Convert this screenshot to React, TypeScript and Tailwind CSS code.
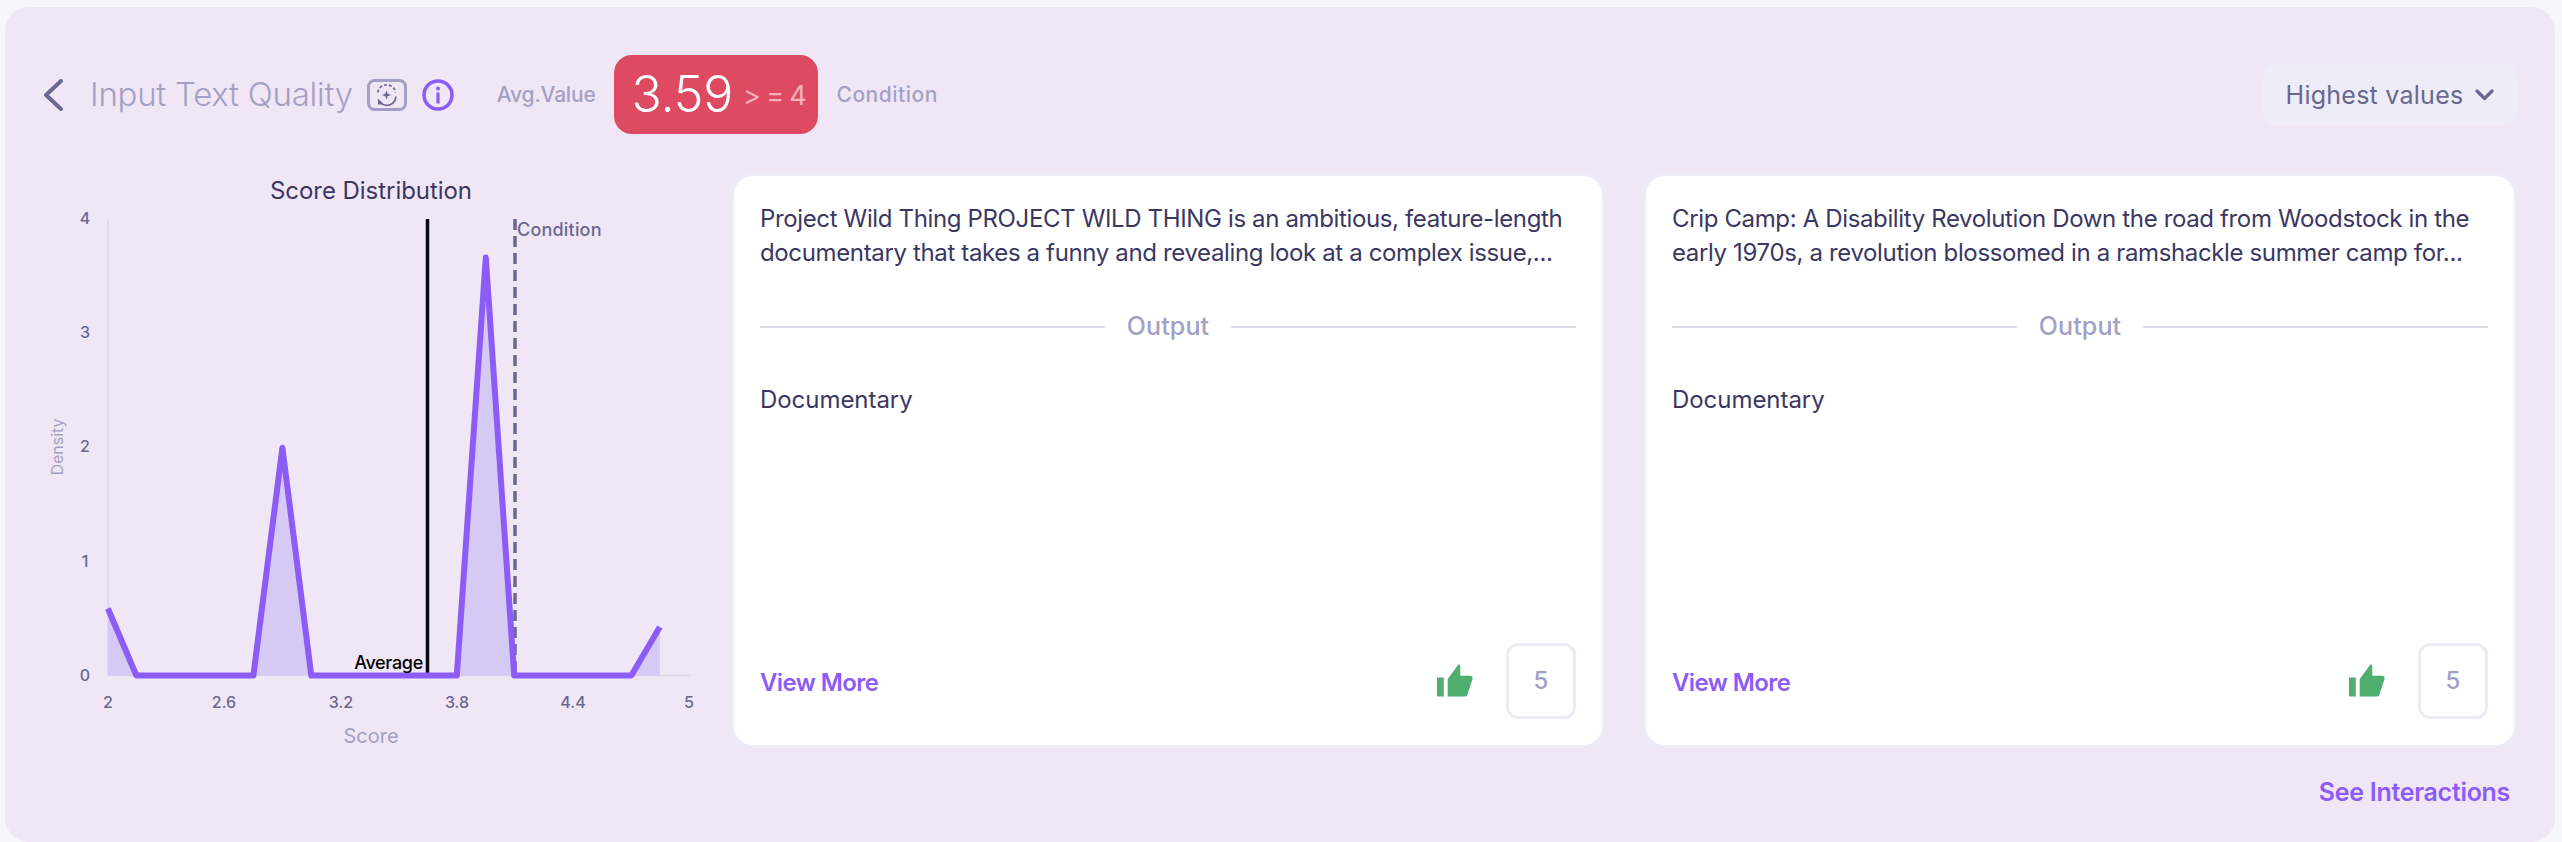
const font = { fontFamily: 'Inter, "Noto Sans", sans-serif' };

function Thumb() {
  return (
    <svg width="36" height="33" viewBox="0 0 36 33" className="shrink-0">
      <rect x="0" y="13.500" width="6.800" height="19" fill="#4fae6d" />
      <path d="M10.700 32.500V15L21.700 0 23.300 2V11.700H33C35.200 11.700 36 13.500 35.500 15L30.700 30C30.200 31.700 29.500 32.500 28 32.500Z" fill="#4fae6d" />
    </svg>
  );
}

function Card({ lines }: { lines: [string, string] }) {
  return (
    <div className="flex h-[575px] w-[874px] flex-col rounded-[22px] border-[3px] border-[#ecebf6] bg-white px-[26px] pt-[26px] pb-[26px]">
      <p className="text-[24px] leading-[34px] tracking-[-0.36px] whitespace-nowrap text-[#3a3862]">
        {lines[0]}
        <br />
        {lines[1]}
      </p>
      <div className="mt-[40px] flex h-[34px] items-center gap-[22px]">
        <div className="h-[2px] flex-1 bg-[#dcdbe6]" />
        <span className="text-[25px] font-medium tracking-[0.1px] text-[#a3a1c3]">Output</span>
        <div className="h-[2px] flex-1 bg-[#dcdbe6]" />
      </div>
      <p className="mt-[39px] text-[24px] leading-[34px] tracking-[-0.05px] text-[#3a3862]">Documentary</p>
      <div className="mt-auto flex items-center">
        <span className="mt-[4px] text-[24px] font-semibold tracking-[-0.6px] text-[#8b5cf6]">View More</span>
        <div className="ml-auto mr-[33px] -mt-[1px]"><Thumb /></div>
        <div className="flex h-[76px] w-[70px] items-center justify-center rounded-[12px] border-[3px] border-[#ecebf6] text-[24px] font-medium text-[#a3a1c3]">5</div>
      </div>
    </div>
  );
}

function Chart() {
  const ox = 43;
  const oy = 173;
  const px = (x: number) => x / 2.178 - ox;
  const py = (y: number) => 160 + y / 2.613 - oy;
  const pts: [number, number][] = [[235, 1172], [297, 1347], [552, 1347], [615, 752], [678, 1347], [995, 1347], [1058, 255], [1120, 1347], [1375, 1347], [1437, 1220]];
  const line = pts.map(([x, y]) => `${px(x).toFixed(1)},${py(y).toFixed(1)}`).join(" ");
  const area = `${px(235).toFixed(1)},${py(1347).toFixed(1)} ${line} ${px(1437).toFixed(1)},${py(1347).toFixed(1)}`;
  const xticks: [string, number][] = [["2", 108], ["2.6", 224], ["3.2", 341], ["3.8", 457], ["4.4", 573], ["5", 689]];
  const yticks: [string, number][] = [["4", 218], ["3", 332], ["2", 446], ["1", 561], ["0", 675]];
  return (
    <svg width="688" height="590" viewBox="0 0 688 590" className="shrink-0" style={font}>
      <text x={328} y={26} textAnchor="middle" fontSize="24" fill="#3a3862" letterSpacing="-0.05">Score Distribution</text>
      <line x1={65} y1={46} x2={65} y2={503} stroke="#dbd9e8" strokeWidth="1.500" />
      <line x1={65} y1={502.500} x2={648} y2={502.500} stroke="#dbd9e8" strokeWidth="1.500" />
      <polygon points={area} fill="#d6c9f4" />
      <line x1={384.500} y1={46} x2={384.500} y2={503} stroke="#0b0a14" strokeWidth="3.500" />
      <line x1={472} y1={46} x2={472} y2={503} stroke="#6a6890" strokeWidth="3.500" strokeDasharray="11 6" />
      <polyline points={line} fill="none" stroke="#8b5cf6" strokeWidth="6" strokeLinejoin="round" />
      <text x={474} y={63} fontSize="18" fontWeight="500" fill="#6a6890" letterSpacing="0.2">Condition</text>
      <text x={380} y={496} textAnchor="end" fontSize="18" fontWeight="500" fill="#000" letterSpacing="-0.3">Average</text>
      {xticks.map(([t, x]) => (
        <text key={t} x={x - ox} y={535} textAnchor="middle" fontSize="16" fontWeight="500" fill="#6a6890">{t}</text>
      ))}
      {yticks.map(([t, y]) => (
        <text key={t} x={42} y={y - oy + 6} textAnchor="middle" fontSize="16" fontWeight="500" fill="#6a6890">{t}</text>
      ))}
      <text x={328} y={570} textAnchor="middle" fontSize="20" fill="#a3a1c3">Score</text>
      <text transform="translate(20 274) rotate(-90)" textAnchor="middle" fontSize="16" fill="#a3a1c3">Density</text>
    </svg>
  );
}

export default function App() {
  return (
    <div className="h-[842px] w-[2562px] overflow-hidden bg-[#f7f6fc] pt-[7px] pl-[5px] pr-[7px]" style={font}>
      <div className="flex h-[835px] flex-col rounded-[24px] bg-[#f1e6f6] px-[38px] pt-[56px]">
        <div className="flex h-[63px] items-center">
          <svg width="20" height="32" viewBox="0 0 20 32" fill="none" className="shrink-0">
            <path d="M18 2 3 16l15 14" stroke="#6a6890" strokeWidth="4" strokeLinecap="round" strokeLinejoin="round" />
          </svg>
          <span className="ml-[27px] text-[33px] font-light tracking-[-0.25px] text-[#a3a1c3]">Input Text Quality</span>
          <svg width="40" height="32" viewBox="0 0 40 32" fill="none" className="ml-[14px] shrink-0">
            <rect x="1.500" y="1.500" width="37" height="29" rx="6" stroke="#a3a1c3" strokeWidth="3" />
            <path d="M10.800 13.500a9 9 0 0 1 17.800 0" stroke="#6a6890" strokeWidth="1.700" strokeDasharray="3 2" />
            <path d="M28.800 17.500a9 9 0 0 1-15.500 6" stroke="#6a6890" strokeWidth="1.700" />
            <path d="M11 19.500v6h6z" fill="#6a6890" />
            <path d="M19.500 11.500l1.200 3.300 3.300 1.200-3.300 1.200-1.200 3.300-1.200-3.300-3.300-1.200 3.300-1.200z" fill="#6a6890" />
          </svg>
          <svg width="32" height="32" viewBox="0 0 32 32" fill="none" className="ml-[15px] shrink-0">
            <circle cx="16" cy="16" r="14" stroke="#8b5cf6" strokeWidth="3.500" />
            <circle cx="16" cy="9.500" r="2" fill="#8b5cf6" />
            <rect x="14.400" y="13.500" width="3.200" height="11" fill="#8b5cf6" />
          </svg>
          <span className="ml-[43px] text-[21px] font-medium tracking-[-0.2px] text-[#a3a1c3]">Avg.Value</span>
          <div className="ml-[18px] flex h-[79px] w-[204px] items-center justify-center gap-[10px] rounded-[18px] bg-[#dd4a62] pl-[6px]">
            <span className="text-[50px] font-light tracking-[-0.2px] text-white">3.59</span>
            <span className="mt-[4px] text-[27px] tracking-[-1.2px] text-[#f3b0bb]">&gt; = 4</span>
          </div>
          <span className="ml-[19px] text-[21px] font-medium tracking-[0.5px] text-[#a3a1c3]">Condition</span>
          <div className="ml-auto flex h-[63px] w-[254px] items-center justify-center gap-[12px] rounded-[14px] bg-[#edecf7]">
            <span className="mt-[3px] text-[25px] tracking-[0.25px] text-[#6a6890]">Highest values</span>
            <svg width="19" height="12" viewBox="0 0 19 12" fill="none"><path d="M2 2l7.500 7.500L17 2" stroke="#6a6890" strokeWidth="3.200" strokeLinecap="round" strokeLinejoin="round" /></svg>
          </div>
        </div>
        <div className="mt-[47px] flex items-start">
          <Chart />
          <div className="flex gap-[38px]">
            <Card lines={["Project Wild Thing PROJECT WILD THING is an ambitious, feature-length", "documentary that takes a funny and revealing look at a complex issue,..."]} />
            <Card lines={["Crip Camp: A Disability Revolution Down the road from Woodstock in the", "early 1970s, a revolution blossomed in a ramshackle summer camp for..."]} />
          </div>
        </div>
        <div className="mt-[11px] self-end pr-[7px] text-[25px] font-semibold tracking-[-0.3px] text-[#8b5cf6]">See Interactions</div>
      </div>
    </div>
  );
}
